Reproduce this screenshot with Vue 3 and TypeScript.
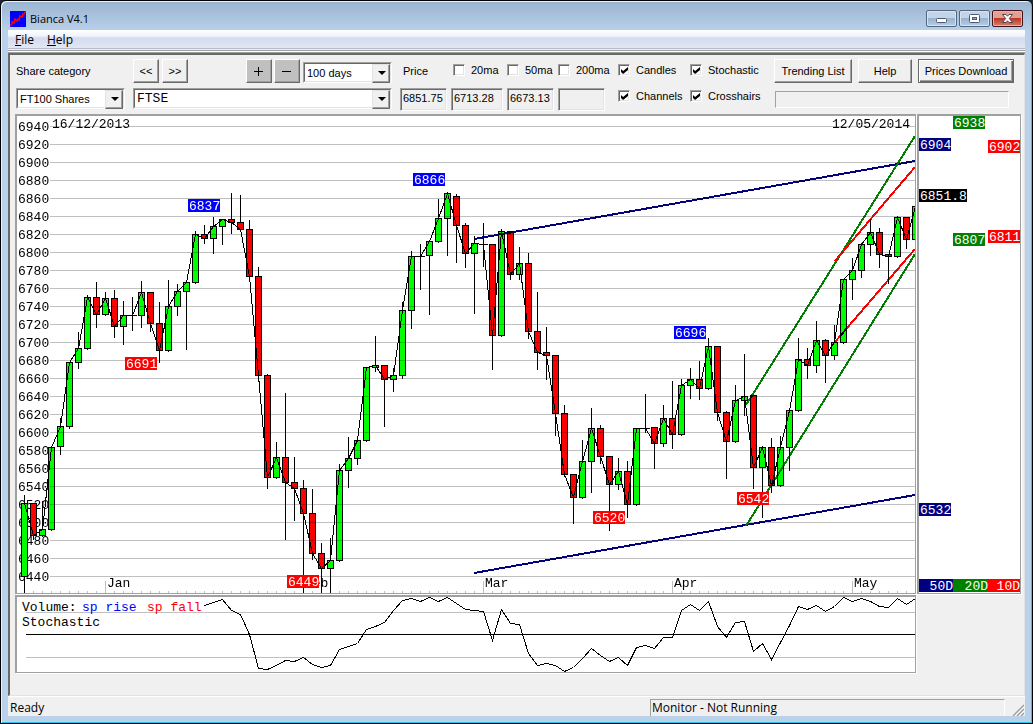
<script setup lang="ts">
import { ref } from 'vue'

type Candle = [high: number, top: number, bottom: number, low: number, kind: 'u' | 'd' | 'n']

const STEP = 9
const FIRST_X = 24
const xAt = (i: number) => FIRST_X + STEP * i

const candles: Candle[] = [
  [494, 503, 576, 592, 'u'], [502, 503, 535, 538, 'd'], [500, 529, 535, 535, 'u'], [445, 447, 529, 529, 'u'],
  [417, 426, 446, 453, 'u'], [361, 362, 426, 427, 'u'], [331, 348, 362, 367, 'u'], [294, 297, 348, 348, 'u'],
  [281, 297, 314, 326, 'd'], [291, 298, 314, 314, 'u'], [289, 298, 326, 336, 'd'], [300, 315, 326, 343, 'u'],
  [296, 315, 315, 329, 'n'], [280, 292, 315, 326, 'u'], [292, 292, 323, 330, 'd'], [301, 323, 350, 361, 'd'],
  [279, 306, 350, 350, 'u'], [283, 291, 306, 314, 'u'], [282, 282, 291, 348, 'u'], [230, 234, 282, 282, 'u'],
  [224, 234, 238, 242, 'd'], [216, 226, 238, 252, 'u'], [219, 219, 226, 243, 'u'], [192, 219, 222, 232, 'd'],
  [194, 222, 229, 229, 'd'], [219, 229, 276, 280, 'd'], [266, 276, 375, 380, 'd'], [373, 375, 477, 487, 'd'],
  [441, 457, 477, 477, 'u'], [392, 457, 482, 538, 'd'], [456, 482, 488, 519, 'd'], [479, 488, 513, 592, 'd'],
  [488, 513, 553, 558, 'd'], [542, 553, 568, 592, 'd'], [537, 560, 568, 591, 'u'], [463, 470, 560, 560, 'u'],
  [436, 458, 470, 486, 'u'], [435, 440, 458, 463, 'u'], [366, 367, 440, 440, 'u'], [335, 365, 367, 370, 'u'],
  [365, 365, 379, 425, 'd'], [367, 375, 379, 390, 'u'], [301, 310, 375, 377, 'u'], [250, 256, 310, 327, 'u'],
  [243, 256, 256, 288, 'n'], [240, 241, 255, 313, 'u'], [198, 218, 241, 241, 'u'], [193, 193, 218, 254, 'u'],
  [193, 196, 225, 261, 'd'], [222, 225, 253, 266, 'd'], [235, 243, 253, 312, 'u'], [222, 244, 244, 265, 'n'],
  [244, 244, 335, 368, 'd'], [228, 231, 335, 335, 'u'], [231, 231, 274, 278, 'd'], [246, 263, 274, 278, 'u'],
  [252, 263, 331, 337, 'd'], [291, 331, 352, 368, 'd'], [326, 352, 355, 378, 'd'], [355, 355, 413, 434, 'd'],
  [404, 413, 474, 475, 'd'], [474, 474, 497, 522, 'd'], [439, 461, 497, 497, 'u'], [407, 428, 461, 491, 'u'],
  [424, 428, 456, 462, 'd'], [456, 456, 484, 529, 'd'], [457, 471, 484, 488, 'u'], [460, 471, 504, 516, 'd'],
  [428, 428, 504, 504, 'u'], [393, 428, 428, 431, 'n'], [427, 427, 443, 467, 'd'], [404, 418, 443, 445, 'u'],
  [380, 418, 434, 447, 'd'], [378, 385, 434, 434, 'u'], [367, 379, 385, 397, 'u'], [360, 379, 388, 398, 'd'],
  [337, 346, 388, 388, 'u'], [346, 346, 412, 419, 'd'], [410, 412, 441, 477, 'd'], [384, 400, 441, 441, 'u'],
  [353, 396, 400, 414, 'u'], [395, 395, 467, 487, 'd'], [447, 447, 467, 516, 'u'], [437, 447, 485, 491, 'd'],
  [435, 447, 485, 485, 'u'], [408, 410, 447, 469, 'u'], [337, 359, 410, 410, 'u'], [347, 359, 365, 377, 'd'],
  [320, 340, 365, 371, 'u'], [338, 340, 355, 381, 'd'], [324, 342, 355, 358, 'u'], [278, 279, 342, 342, 'u'],
  [257, 270, 279, 298, 'u'], [242, 244, 270, 276, 'u'], [218, 232, 244, 254, 'u'], [227, 232, 254, 266, 'd'],
  [253, 254, 256, 282, 'd'], [216, 217, 256, 256, 'u'], [217, 217, 239, 247, 'd'], [206, 206, 239, 239, 'u'],
]

const closeLine = candles.map(([, t, b, , k], i) => `${xAt(i)},${k === 'd' ? b : t}`).join(' ')

const priceTicks = Array.from({ length: 26 }, (_, k) => ({ price: 6940 - 20 * k, y: 126 + 18 * k }))
const dayTicks = Array.from({ length: 98 }, (_, k) => xAt(k + 1))
const months = [
  { name: 'Jan', x: 105 }, { name: 'Feb', x: 303 }, { name: 'Mar', x: 483 }, { name: 'Apr', x: 672 }, { name: 'May', x: 852 },
]

const peaks = [
  { v: '6837', x: 188, y: 199, c: 'blue' }, { v: '6691', x: 125, y: 357, c: 'red' },
  { v: '6449', x: 287, y: 575, c: 'red' }, { v: '6866', x: 413, y: 173, c: 'blue' },
  { v: '6520', x: 593, y: 511, c: 'red' }, { v: '6696', x: 674, y: 326, c: 'blue' },
  { v: '6542', x: 737, y: 492, c: 'red' },
]

const projections = [
  { v: '6938', x: 953, y: 116, w: 32, c: 'green' }, { v: '6904', x: 919, y: 138, w: 32, c: 'navy' },
  { v: '6902', x: 988, y: 140, w: 32, c: 'red' }, { v: '6851.8', x: 919, y: 189, w: 48, c: 'black' },
  { v: '6807', x: 953, y: 233, w: 32, c: 'green' }, { v: '6811', x: 988, y: 230, w: 32, c: 'red' },
  { v: '6532', x: 919, y: 503, w: 32, c: 'navy' },
]
const spans = [
  { v: '50D', x: 919, w: 34, c: 'navy' }, { v: '20D', x: 953, w: 35, c: 'green' }, { v: '10D', x: 988, w: 32, c: 'red' },
]

const stochastic = [
  605, 602, 599, 610, 614, 634, 668, 669, 665, 660, 661, 657, 664, 667, 665, 649, 646, 643, 629, 626, 622, 610, 600, 598,
  601, 597, 601, 597, 603, 609, 610, 611, 640, 609, 623, 624, 653, 665, 663, 665, 671, 667, 658, 648, 655, 661, 657, 665,
  647, 645, 648, 637, 637, 610, 604, 610, 601, 626, 637, 622, 621, 651, 643, 659, 642, 625, 606, 609, 605, 611, 606, 597,
  601, 598, 601, 606, 607, 598, 604, 598,
]
const stochasticLine = stochastic.map((y, i) => `${xAt(i + 20)},${y}`).join(' ')

const averages = ref([
  { id: 'ma20', label: '20ma', on: false }, { id: 'ma50', label: '50ma', on: false }, { id: 'ma200', label: '200ma', on: false },
])
const overlays = ref([
  { id: 'candles', label: 'Candles', on: true }, { id: 'stochastic', label: 'Stochastic', on: true },
  { id: 'channels', label: 'Channels', on: true }, { id: 'crosshairs', label: 'Crosshairs', on: true },
])
const prices = [
  { label: 'Price', value: '6851.75' }, { label: '20 day average', value: '6713.28' },
  { label: '50 day average', value: '6673.13' }, { label: '200 day average', value: '' },
]
</script>

<template>
  <div class="window">
    <header class="titlebar">
      <svg class="app-icon" viewBox="0 0 16 16" aria-hidden="true">
        <rect width="16" height="16" fill="#00f" />
        <path d="M0 15 L2 13 L2 11 L4 12 L5 8 L7 10 L8 8 L9 9 L10 5 L12 6 L13 3 L14 3 L16 0" fill="none" stroke="#f00" stroke-width="1.4" />
      </svg>
      <h1>Bianca V4.1</h1>
      <div class="win-buttons">
        <button type="button" aria-label="Minimize">
          <svg viewBox="0 0 29 15"><rect x="9.5" y="7.5" width="10" height="4" rx="1" fill="#fff" stroke="#4d5a72" /></svg>
        </button>
        <button type="button" aria-label="Maximize">
          <svg viewBox="0 0 29 15"><rect x="9.5" y="3.5" width="10" height="8" rx="1" fill="#fff" stroke="#4d5a72" /><rect x="12.5" y="6.5" width="4" height="2" fill="#8fb0d4" stroke="#4d5a72" /></svg>
        </button>
        <button type="button" class="close" aria-label="Close">
          <svg viewBox="0 0 29 15"><path d="M9.5 3.500h3.500l1.500 1.700 1.500-1.700h3.500l-3.200 4 3.200 4H16l-1.500-1.700-1.500 1.700H9.500l3.200-4z" fill="#fff" stroke="#534450" /></svg>
        </button>
      </div>
    </header>

    <nav class="menubar">
      <button type="button"><u>F</u>ile</button>
      <button type="button"><u>H</u>elp</button>
    </nav>

    <main class="client">
      <section class="toolbar">
        <div class="group share">
          <div class="row">
            <label class="caption" for="category">Share category</label>
            <button type="button" class="btn square">&lt;&lt;</button>
            <button type="button" class="btn square">&gt;&gt;</button>
            <button type="button" class="btn square grey plus" aria-label="Zoom in">
              <svg viewBox="0 0 10 10" shape-rendering="crispEdges"><path d="M0 5h9v1h-9z M4 1h1v9h-1z" /></svg>
            </button>
            <button type="button" class="btn square grey" aria-label="Zoom out">
              <svg viewBox="0 0 10 10" shape-rendering="crispEdges"><path d="M0 5h9v1h-9z" /></svg>
            </button>
            <span class="combo days"><select aria-label="Period"><option>100 days</option></select></span>
          </div>
          <div class="row low">
            <span class="combo category"><select id="category"><option>FT100 Shares</option></select></span>
            <span class="combo share-name"><select aria-label="Share"><option>FTSE</option></select></span>
          </div>
        </div>

        <div class="group figures">
          <div class="average-row">
            <span class="price-label">Price</span>
            <label v-for="a in averages" :key="a.id" class="check" :for="a.id">
              <input :id="a.id" v-model="a.on" type="checkbox">{{ a.label }}
            </label>
          </div>
          <div class="figure-row">
            <input v-for="p in prices" :key="p.label" class="figure" type="text" readonly :value="p.value" :aria-label="p.label">
          </div>
        </div>

        <div class="group overlays">
          <label v-for="o in overlays" :key="o.id" class="check" :for="o.id">
            <input :id="o.id" v-model="o.on" type="checkbox">{{ o.label }}
          </label>
        </div>

        <div class="group actions">
          <div class="row">
            <button type="button" class="btn trending">Trending List</button>
            <button type="button" class="btn help">Help</button>
            <button type="button" class="btn default">Prices Download</button>
          </div>
          <div class="progress" role="progressbar" aria-label="Download progress" aria-valuenow="0" />
        </div>
      </section>

      <section class="charts">
        <div class="panel">
          <svg viewBox="17 116 898 477" class="plot" role="img" aria-label="FTSE candlestick chart">
            <g class="mono">
              <text v-for="t in priceTicks" :key="t.price" x="18" :y="t.y + 5">{{ t.price }}</text>
              <text x="52" y="128">16/12/2013</text>
              <text x="832" y="128">12/05/2014</text>
              <text v-for="m in months" :key="m.name" :x="m.x + 2" y="587">{{ m.name }}</text>
            </g>
            <g class="crisp" transform="translate(.5 .5)">
              <line v-for="x in dayTicks" :key="x" :x1="x" y1="590" :x2="x" y2="593" stroke="#c0c0c0" />
              <line v-for="m in months" :key="m.name" :x1="m.x" y1="580" :x2="m.x" y2="593" stroke="#c0c0c0" />
              <g v-for="(c, i) in candles" :key="i" stroke="#000">
                <line :x1="xAt(i)" :y1="c[0]" :x2="xAt(i)" :y2="c[3] + 1" />
                <line v-if="c[4] === 'n'" :x1="xAt(i) - 3" :y1="c[1]" :x2="xAt(i) + 4" :y2="c[1]" />
                <rect v-else :x="xAt(i) - 3" :y="c[1]" width="6" :height="c[2] - c[1]" :fill="c[4] === 'u' ? '#0f0' : '#f00'" />
              </g>
              <polyline :points="closeLine" fill="none" stroke="#000" />
            </g>
            <g class="crisp blend" transform="translate(.5 .5)">
              <line v-for="t in priceTicks" :key="t.price" x1="49" :y1="t.y" x2="915" :y2="t.y" stroke="#c0c0c0" />
            </g>
            <g class="crisp blend" fill="none" stroke-width="2">
              <polyline points="474,239 915,161" stroke="#000080" />
              <polyline points="474,573 915,495" stroke="#000080" />
              <polyline points="746,405 812,300 915,136" stroke="#008000" />
              <polyline points="746,526 915,254" stroke="#008000" />
              <polyline points="835,261 915,167" stroke="#f00" />
              <polyline points="835,342 915,249" stroke="#f00" />
            </g>
            <g v-for="p in peaks" :key="p.v" class="mono">
              <rect :x="p.x" :y="p.y" width="32" height="13" :fill="p.c" />
              <text :x="p.x + 1" :y="p.y + 11" fill="#fff">{{ p.v }}</text>
            </g>
          </svg>
        </div>
        <div class="panel">
          <svg viewBox="919 116 101 477" class="plot" role="img" aria-label="Channel projections">
            <g v-for="p in projections" :key="p.v" class="mono">
              <rect :x="p.x" :y="p.y" :width="p.w" height="13" :fill="p.c" />
              <text :x="p.x + 1" :y="p.y + 11" fill="#fff">{{ p.v }}</text>
            </g>
            <g v-for="s in spans" :key="s.v" class="mono">
              <rect :x="s.x" y="579" :width="s.w" height="13" :fill="s.c" />
              <text :x="s.x + s.w" y="590" text-anchor="end" fill="#fff">{{ s.v }}</text>
            </g>
          </svg>
        </div>
        <div class="panel">
          <svg viewBox="17 597 898 75" class="plot" role="img" aria-label="Stochastic chart">
            <g class="crisp" transform="translate(.5 .5)" fill="none">
              <line x1="25" y1="612" x2="915" y2="612" stroke="#c0c0c0" />
              <line x1="25" y1="657" x2="915" y2="657" stroke="#c0c0c0" />
              <line x1="25" y1="634" x2="915" y2="634" stroke="#000" />
              <polyline :points="stochasticLine" stroke="#000" />
            </g>
            <g class="mono">
              <text x="22" y="611">Volume:</text>
              <text x="82" y="611" fill="#00f">sp rise</text>
              <text x="147" y="611" fill="#f00">sp fall</text>
              <text x="22" y="626">Stochastic</text>
            </g>
          </svg>
        </div>
      </section>
    </main>

    <footer class="statusbar">
      <span class="ready">Ready</span>
      <span class="monitor">Monitor - Not Running</span>
      <svg class="grip" viewBox="0 0 12 12" aria-hidden="true">
        <path d="M1 12L12 1M5 12L12 5M9 12L12 9" stroke="#a0a0a0" stroke-width="1.5" />
        <path d="M3 12L12 3M7 12L12 7" stroke="#fff" />
      </svg>
    </footer>
  </div>
</template>

<style>
body {
  margin: 0;
  background: #1c2430;
}
</style>

<style scoped>
* {
  box-sizing: border-box;
}

.window {
  display: flex;
  flex-direction: column;
  min-height: 100vh;
  padding: 0 7px 7px;
  border: 1px solid #000;
  border-radius: 6px 6px 0 0;
  background: linear-gradient(#99b4d1, #b9d1ea 30px);
  box-shadow: inset 1px 1px 0 #e8f2fc, inset -1px -1px 0 #2fc4e8;
  font: 11px/14px "Liberation Sans", Arial, sans-serif;
  color: #000;
}

button,
select,
input {
  margin: 0;
  font: inherit;
  color: inherit;
}

.titlebar {
  display: flex;
  align-items: center;
  height: 29px;
  padding: 6px 2px 0;
  font-family: "Open Sans", "Noto Sans", sans-serif;
}

.app-icon {
  width: 16px;
  height: 16px;
}

h1 {
  margin: 0 auto 0 4px;
  font-size: 11px;
  font-weight: 400;
}

.win-buttons {
  display: flex;
  gap: 2px;
}

.win-buttons button {
  width: 31px;
  height: 17px;
  padding: 0;
  border: 1px solid #54657f;
  border-radius: 2px;
  background: linear-gradient(#c3d4e8 50%, #98b2d0 50%, #b5cde6);
  box-shadow: inset 0 0 0 1px #d5e3f3;
}

.win-buttons .close {
  border-color: #43141b;
  background: linear-gradient(#e0a093 45%, #b83a26 50%, #d5806a);
  box-shadow: inset 0 0 0 1px #e8b3a8;
}

.win-buttons svg {
  display: block;
  width: 29px;
  height: 15px;
}

.menubar {
  display: flex;
  height: 19px;
  border-bottom: 1px solid #b6bccc;
  background: linear-gradient(#fff, #f0f3fa 6px, #d5dbee 8px, #e2e7f6);
  font: 12px/20px "Open Sans", "Noto Sans", sans-serif;
}

.menubar button {
  padding: 0 6px 0 7px;
  border: 0;
  background: none;
}

.client {
  flex: 1;
  margin-top: 4px;
  border: solid;
  border-width: 2px 1px 1px 2px;
  border-color: #696969 #e3e3e3 #e3e3e3 #696969;
  background: #f0f0f0;
  box-shadow: 0 -1px 0 #a0a0a0, 0 -2px 0 #fff, 0 -3px 0 #a0a0a0, 0 -4px 0 #f0f0f0;
}

.toolbar {
  display: flex;
  gap: 8px;
  padding: 4px 6px 3px;
}

.group {
  display: grid;
  grid-template-rows: 24px 23px;
  row-gap: 5px;
}

.row {
  display: flex;
  align-items: center;
}

.row.low {
  align-items: flex-start;
  gap: 8px;
}

.caption {
  width: 117px;
}

.btn {
  display: flex;
  align-items: center;
  justify-content: center;
  height: 24px;
  padding: 0;
  border: 1px solid;
  border-color: #fff #696969 #696969 #fff;
  background: #f0f0f0;
  box-shadow: inset -1px -1px 0 #a0a0a0;
}

.square {
  width: 26px;
  margin-right: 3px;
}

.square.grey {
  background: #c0c0c0;
}

.square.plus {
  margin: 0 2px 0 55px;
}

.square svg {
  width: 10px;
  height: 10px;
}

.combo {
  position: relative;
  height: 21px;
  border: 1px solid;
  border-color: #a0a0a0 #fff #fff #a0a0a0;
}

.combo select {
  appearance: none;
  display: block;
  width: 100%;
  height: 19px;
  padding: 0 18px 0 2px;
  border: 1px solid;
  border-color: #696969 #e3e3e3 #e3e3e3 #696969;
  border-radius: 0;
  background: #fff;
}

.combo::before {
  content: "";
  position: absolute;
  top: 1px;
  right: 1px;
  width: 16px;
  height: 17px;
  border: 1px solid;
  border-color: #e3e3e3 #696969 #696969 #e3e3e3;
  background: #f0f0f0;
  box-shadow: inset -1px -1px 0 #a0a0a0;
  pointer-events: none;
}

.combo::after {
  content: "";
  position: absolute;
  top: 8px;
  right: 5px;
  border: solid transparent;
  border-width: 4px 4px 0;
  border-top-color: #000;
  pointer-events: none;
}

.days {
  align-self: flex-end;
  width: 89px;
}

.category {
  width: 109px;
}

.share-name {
  width: 259px;
}

.share-name select {
  font: 13px/15px "Liberation Mono", "Courier New", monospace;
}

.figures {
  width: 210px;
}

.average-row {
  display: grid;
  grid-template-columns: 53px 54px 51px 52px;
}

.figure-row {
  display: grid;
  grid-template-columns: 47px 52px 47px 47px;
  gap: 4px;
}

.price-label {
  padding: 5px 3px;
}

.check {
  display: flex;
  align-items: center;
  gap: 6px;
  height: 22px;
  white-space: nowrap;
}

.check input {
  appearance: none;
  flex: none;
  width: 12px;
  height: 12px;
  border: 1px solid;
  border-color: #a0a0a0 #fff #fff #a0a0a0;
  background: #fff;
  box-shadow: inset 1px 1px 0 #696969, inset -1px -1px 0 #e3e3e3;
}

.check input:checked::before {
  content: "";
  display: block;
  width: 7px;
  height: 7px;
  margin: 2px 0 0 2px;
  background: #000;
  clip-path: polygon(0 28%, 30% 58%, 100% 0, 100% 42%, 30% 100%, 0 71%);
}

.figure {
  min-width: 0;
  height: 23px;
  padding: 0 2px 3px;
  border: 1px solid;
  border-color: #a0a0a0 #fff #fff #a0a0a0;
  border-radius: 0;
  background: #f0f0f0;
  box-shadow: inset 1px 1px 0 #696969, inset -1px -1px 0 #e3e3e3;
}

.overlays {
  grid-template-columns: 72px 76px;
}

.overlays .check:nth-child(n + 3) {
  height: 16px;
}

.actions .row {
  gap: 6px;
}

.trending {
  width: 78px;
}

.help {
  width: 54px;
}

.default {
  width: 96px;
  border-color: #696969;
  box-shadow: inset 1px 1px 0 #fff, inset -1px -1px 0 #696969, inset -2px -2px 0 #a0a0a0;
}

.progress {
  height: 17px;
  margin: 3px 5px 0 1px;
  border: 1px solid;
  border-color: #a0a0a0 #fff #fff #a0a0a0;
}

.charts {
  display: grid;
  grid-template-columns: 1fr 104px;
  gap: 1px;
  padding: 0 3px 0 5px;
}

.panel {
  border: solid #a0a0a0;
  border-width: 2px 1px 1px 2px;
  background: #fff;
  box-shadow: 1px 1px 0 #fff;
}

.plot {
  display: block;
  width: 100%;
  height: auto;
  isolation: isolate;
  background: #fff;
}

.mono {
  font: 13px "Liberation Mono", "Courier New", monospace;
}

.crisp {
  shape-rendering: crispEdges;
}

.blend {
  mix-blend-mode: multiply;
}

.statusbar {
  display: flex;
  align-items: flex-end;
  height: 20px;
  border-top: 1px solid #fff;
  background: #f0f0f0;
  font: 12px/16px "Open Sans", "Noto Sans", sans-serif;
}

.ready {
  flex: 0 0 642px;
  padding-left: 2px;
}

.monitor {
  flex: 1;
  height: 17px;
  padding-left: 1px;
  border: solid;
  border-width: 1px 1px 0;
  border-color: #a0a0a0 #fff #fff #a0a0a0;
}

.grip {
  width: 12px;
  height: 12px;
  margin: 0 1px 0 7px;
}
</style>
